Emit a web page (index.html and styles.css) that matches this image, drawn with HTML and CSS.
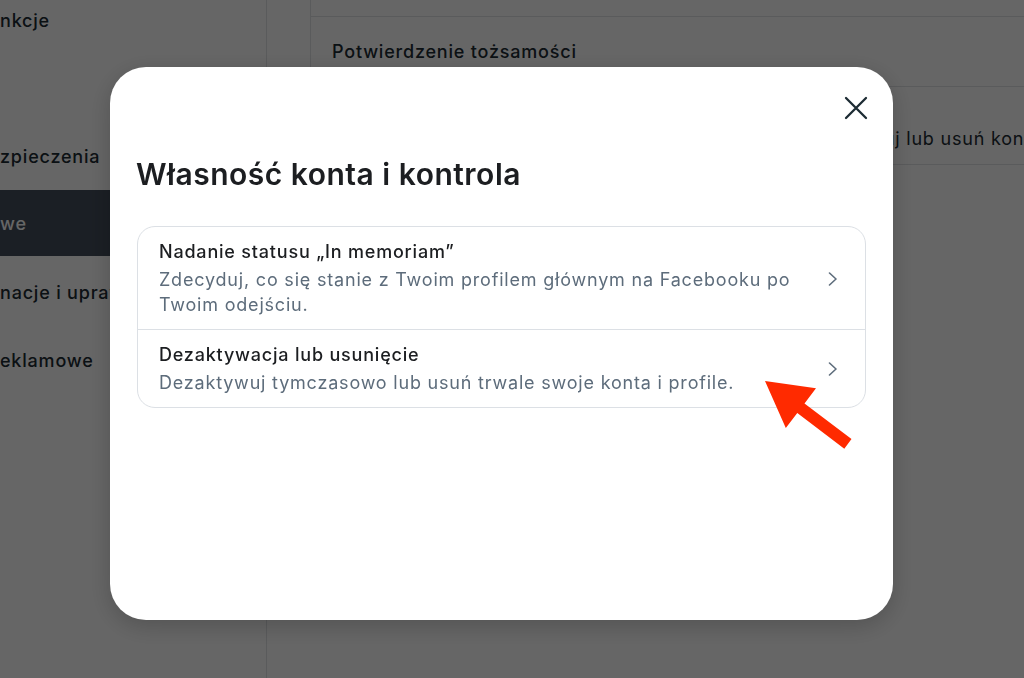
FILE: index.html
```html
<!DOCTYPE html>
<html lang="pl">
<head>
    <meta charset="UTF-8">
    <meta name="viewport" content="width=device-width, initial-scale=1.0">
    <title>Centrum kont</title>
    <link rel="stylesheet" href="styles.css">
</head>
<body>
<div class="page">
    <nav class="sidebar">
        <div class="nav-item">nkcje</div>
        <div class="nav-item nav-gap"></div>
        <div class="nav-item">zpieczenia</div>
        <div class="nav-item active">we</div>
        <div class="nav-item">nacje i upraw</div>
        <div class="nav-item">eklamowe</div>
    </nav>
    <main class="content">
        <div class="panel">
            <div class="panel-row panel-row-top"></div>
            <div class="panel-row">Potwierdzenie tożsamości</div>
            <div class="panel-row panel-row-double">
                <div class="panel-title">Własność konta i kontrola</div>
                <div class="panel-desc">Zarządzaj danymi, zmodyfikuj osobę kontaktową, dezaktywuj lub usuń konta i profile.</div>
            </div>
        </div>
    </main>
</div>

<div class="overlay">
    <div class="modal" role="dialog" aria-labelledby="modal-title">
        <div class="modal-header">
            <button class="close-btn" aria-label="Zamknij">
                <svg width="24" height="24" viewBox="0 0 24 24">
                    <path d="M2 2 L22 22 M22 2 L2 22" stroke="#1c2b33" stroke-width="2.3" stroke-linecap="round" fill="none"/>
                </svg>
            </button>
        </div>
        <h2 id="modal-title" class="modal-title">Własność konta i kontrola</h2>
        <ul class="option-list">
            <li class="option">
                <div class="option-text">
                    <div class="option-title">Nadanie statusu „In memoriam”</div>
                    <div class="option-desc">Zdecyduj, co się stanie z Twoim profilem głównym na Facebooku po Twoim odejściu.</div>
                </div>
                <svg class="chevron" width="10" height="14" viewBox="0 0 10 14">
                    <path d="M1.5 1 L8 7 L1.5 13" stroke="#5d6c7b" stroke-width="1.6" fill="none" stroke-linecap="round" stroke-linejoin="round"/>
                </svg>
            </li>
            <li class="option">
                <div class="option-text">
                    <div class="option-title">Dezaktywacja lub usunięcie</div>
                    <div class="option-desc">Dezaktywuj tymczasowo lub usuń trwale swoje konta i profile.</div>
                </div>
                <svg class="chevron" width="10" height="14" viewBox="0 0 10 14">
                    <path d="M1.5 1 L8 7 L1.5 13" stroke="#5d6c7b" stroke-width="1.6" fill="none" stroke-linecap="round" stroke-linejoin="round"/>
                </svg>
            </li>
        </ul>
    </div>
</div>

<svg class="pointer-arrow" width="100" height="80" viewBox="0 0 100 80">
    <polygon points="5,6 56,13.3 44.5,28.4 91.5,64.1 84.3,73.7 37.3,38 25.8,53.1" fill="#ff2a00"/>
</svg>
</body>
</html>
```
FILE: styles.css
```css
body {
    margin: 0;
    width: 1024px;
    height: 678px;
    overflow: hidden;
    font-family: 'Inter', 'Noto Sans', Arial, sans-serif;
    letter-spacing: 0.8px;
    background-color: #ffffff;
    color: #1c2b33;
}
.page {
    display: flex;
    height: 678px;
}
.sidebar {
    width: 266px;
    border-right: 1px solid #e1e3e6;
    overflow: hidden;
    margin-top: -14px;
}
.nav-item {
    height: 68px;
    display: flex;
    align-items: center;
    font-size: 18px;
    font-weight: 500;
    white-space: nowrap;
}
.nav-item.active {
    background-color: #444e5c;
    color: #ffffff;
    height: 66px;
    margin-bottom: 2px;
}
.content {
    flex: 1;
    padding-left: 43px;
    overflow: hidden;
}
.panel {
    border-left: 1px solid #e1e3e6;
    border-bottom: 1px solid #e1e3e6;
}
.panel-row {
    height: 69px;
    border-bottom: 1px solid #e1e3e6;
    padding-left: 21px;
    display: flex;
    align-items: center;
    font-size: 18px;
    font-weight: 500;
    white-space: nowrap;
}
.panel-row-top {
    height: 16px;
}
.panel-row-double {
    height: 77px;
    border-bottom: none;
    flex-direction: column;
    align-items: flex-start;
    justify-content: center;
    gap: 4px;
}
.panel-desc {
    font-weight: 400;
}
.overlay {
    position: fixed;
    inset: 0;
    background-color: rgba(0, 0, 0, 0.6);
    padding: 67px 0 0 110px;
}
.modal {
    width: 783px;
    height: 553px;
    box-sizing: border-box;
    background-color: #ffffff;
    border-radius: 36px;
    box-shadow: 0 6px 24px rgba(0, 0, 0, 0.2);
    padding: 21px 27px;
}
.modal-header {
    display: flex;
    justify-content: flex-end;
    margin-right: -10px;
}
.close-btn {
    width: 40px;
    height: 40px;
    border: none;
    background: none;
    padding: 0;
    display: flex;
    align-items: center;
    justify-content: center;
    cursor: pointer;
}
.modal-title {
    margin: 29px 0 34px -1px;
    font-size: 30px;
    line-height: 35px;
    font-weight: 600;
    letter-spacing: 0.5px;
    color: #1c1e21;
}
.option-list {
    list-style: none;
    margin: 0;
    padding: 0;
    border: 1px solid #dce0e5;
    border-radius: 18px;
}
.option {
    display: flex;
    align-items: center;
    padding: 13px 27px 12px 21px;
    gap: 20px;
}
.option + .option {
    border-top: 1px solid #dce0e5;
}
.option-text {
    flex: 1;
}
.option-title {
    font-size: 18px;
    line-height: 24px;
    font-weight: 500;
    color: #1c1e21;
    margin-bottom: 3px;
}
.option-desc {
    font-size: 18px;
    line-height: 25px;
    color: #5d6c7b;
}
.chevron {
    flex-shrink: 0;
}
.pointer-arrow {
    position: absolute;
    left: 760px;
    top: 375px;
}
```
